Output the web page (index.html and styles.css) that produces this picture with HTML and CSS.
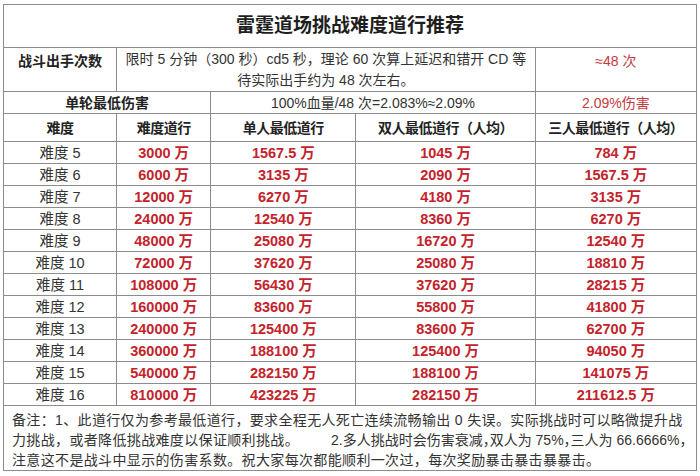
FILE: index.html
```html
<!DOCTYPE html>
<html lang="zh-CN">
<head>
<meta charset="utf-8">
<title>雷霆道场挑战难度道行推荐</title>
<link rel="stylesheet" href="styles.css">
</head>
<body>
<div class="page">
<table class="sheet">
  <colgroup>
    <col class="c1"><col class="c2"><col class="c3"><col class="c4"><col class="c5">
  </colgroup>
  <tr class="title-row"><td colspan="5" class="title">雷霆道场挑战难度道行推荐</td></tr>
  <tr class="info-row">
    <td class="label top">战斗出手次数</td>
    <td colspan="3" class="desc">限时 5 分钟（300 秒）cd5 秒，理论 60 次算上延迟和错开 CD 等<br>待实际出手约为 48 次左右。</td>
    <td class="hint top">≈48 次</td>
  </tr>
  <tr class="dmg-row">
    <td colspan="2" class="label">单轮最低伤害</td>
    <td colspan="2" class="plain">100%血量/48 次=2.083%≈2.09%</td>
    <td class="hint">2.09%伤害</td>
  </tr>
  <tr class="head-row">
    <th>难度</th><th>难度道行</th><th>单人最低道行</th><th>双人最低道行（人均）</th><th>三人最低道行（人均）</th>
  </tr>
  <tr class="data"><td>难度 5</td><td>3000 万</td><td>1567.5 万</td><td>1045 万</td><td>784 万</td></tr>
  <tr class="data"><td>难度 6</td><td>6000 万</td><td>3135 万</td><td>2090 万</td><td>1567.5 万</td></tr>
  <tr class="data"><td>难度 7</td><td>12000 万</td><td>6270 万</td><td>4180 万</td><td>3135 万</td></tr>
  <tr class="data"><td>难度 8</td><td>24000 万</td><td>12540 万</td><td>8360 万</td><td>6270 万</td></tr>
  <tr class="data"><td>难度 9</td><td>48000 万</td><td>25080 万</td><td>16720 万</td><td>12540 万</td></tr>
  <tr class="data"><td>难度 10</td><td>72000 万</td><td>37620 万</td><td>25080 万</td><td>18810 万</td></tr>
  <tr class="data"><td>难度 11</td><td>108000 万</td><td>56430 万</td><td>37620 万</td><td>28215 万</td></tr>
  <tr class="data"><td>难度 12</td><td>160000 万</td><td>83600 万</td><td>55800 万</td><td>41800 万</td></tr>
  <tr class="data"><td>难度 13</td><td>240000 万</td><td>125400 万</td><td>83600 万</td><td>62700 万</td></tr>
  <tr class="data"><td>难度 14</td><td>360000 万</td><td>188100 万</td><td>125400 万</td><td>94050 万</td></tr>
  <tr class="data"><td>难度 15</td><td>540000 万</td><td>282150 万</td><td>188100 万</td><td>141075 万</td></tr>
  <tr class="data"><td>难度 16</td><td>810000 万</td><td>423225 万</td><td>282150 万</td><td>211612.5 万</td></tr>
  <tr class="note-row">
    <td colspan="5" class="note">备注：1、此道行仅为参考最低道行，要求全程无人死亡连续流畅输出 0 失误。实际挑战时可以略微提升战<br>力挑战，或者降低挑战难度以保证顺利挑战。<span class="gap"></span><span class="tight">2.多人挑战时会伤害衰减<span class="half">，</span>双人为 75%<span class="half">，</span>三人为 66.6666%<span class="half">，</span></span><br>注意这不是战斗中显示的伤害系数。祝大家每次都能顺利一次过，每次奖励暴击暴击暴暴击。</td>
  </tr>
</table>
</div>
</body>
</html>
```

FILE: styles.css
```css
html, body {
  margin: 0;
  padding: 0;
  background: #ffffff;
}
.page {
  padding: 4px 0 0 3px;
}
.sheet {
  border-collapse: collapse;
  table-layout: fixed;
  width: 694px;
  font-family: "Liberation Sans", "Noto Sans CJK SC", sans-serif;
  font-size: 14px;
  color: #333333;
  border: 1px solid #7a7a7a;
}
.c1 { width: 113px; }
.c2 { width: 94px; }
.c3 { width: 145px; }
.c4 { width: 179px; }
.c5 { width: 161px; }
.sheet td, .sheet th {
  border: 1px solid #8c8c8c;
  padding: 0 2px;
  text-align: center;
  vertical-align: middle;
  white-space: nowrap;
  line-height: 20px;
  overflow: hidden;
}
.title-row { height: 43px; }
.title {
  font-size: 19px;
  font-weight: bold;
  color: #1e1e1e;
}
.info-row { height: 44px; }
.top {
  vertical-align: top !important;
  padding-top: 3px !important;
}
.label {
  font-weight: bold;
  color: #222222;
}
.desc {
  line-height: 21px !important;
}
.hint {
  color: #c43a3f;
}
.dmg-row { height: 22px; }
.head-row { height: 28px; }
.head-row th {
  font-weight: bold;
  color: #222222;
  letter-spacing: -0.5px;
}
.data { height: 22px; }
.data td {
  font-size: 14.5px;
  font-weight: bold;
  color: #c4232b;
}
.data td:first-child {
  font-weight: normal;
  color: #333333;
}
.note-row { height: 63px; }
.note {
  text-align: left !important;
  padding: 4px 6px 0 8px !important;
  vertical-align: top !important;
  letter-spacing: 0.35px;
}
.tight {
  letter-spacing: 0;
}
.half {
  font-feature-settings: "halt" 1;
}
.gap {
  display: inline-block;
  width: 32px;
}
```
